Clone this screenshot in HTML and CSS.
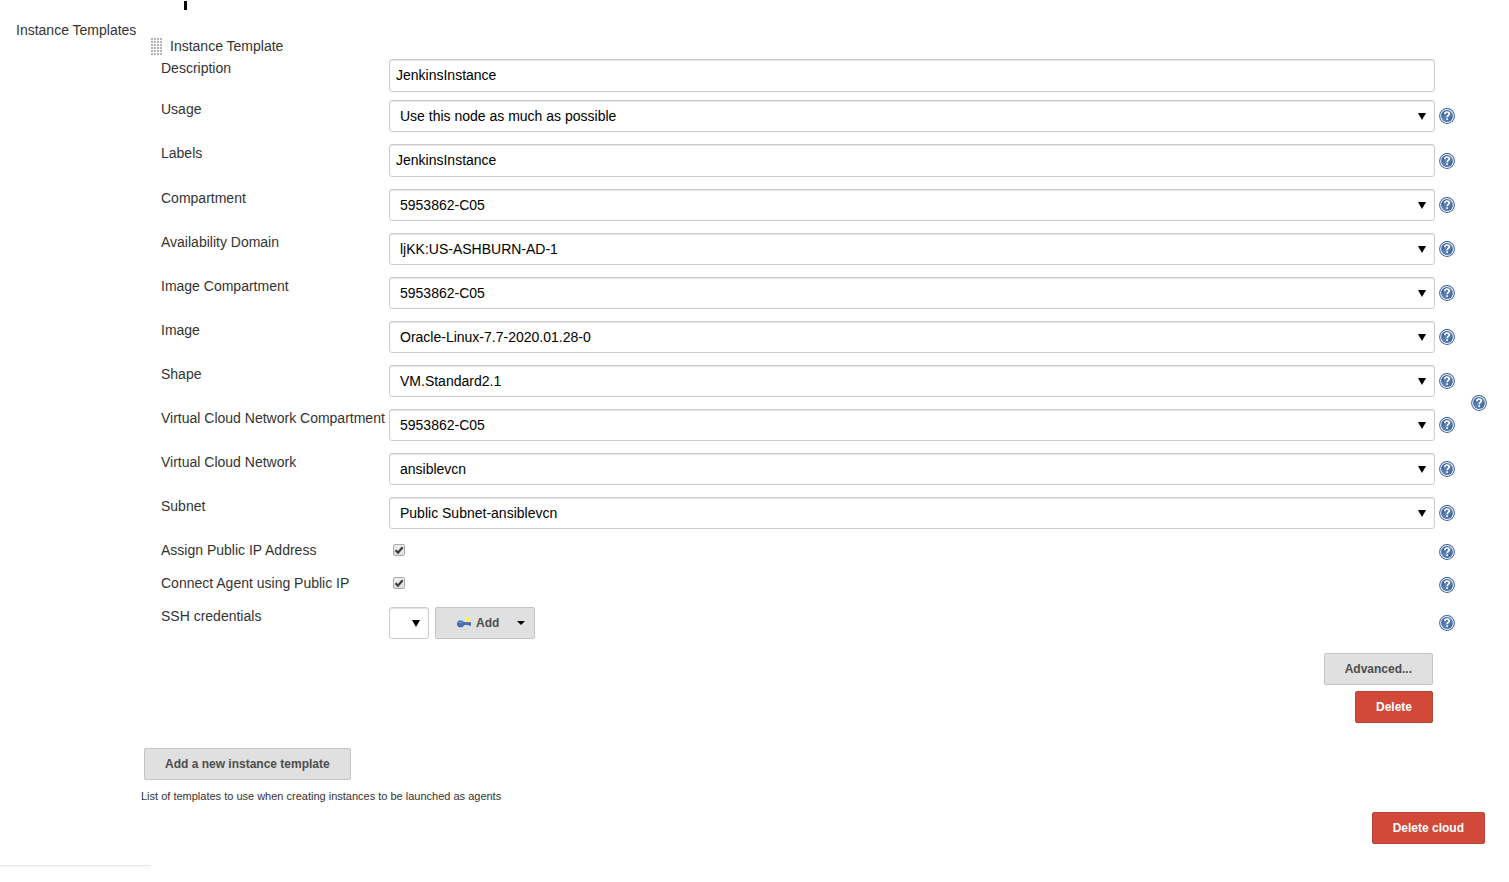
FILE: index.html
```html
<!DOCTYPE html>
<html lang="en">
<head>
<meta charset="utf-8">
<title>Instance Templates</title>
<link rel="stylesheet" href="styles.css">
</head>
<body>
<svg class="defs" aria-hidden="true">
  <defs>
    <linearGradient id="blue" x1="0" y1="0" x2="1" y2="1">
      <stop offset="0" stop-color="#26498a"/><stop offset="0.5" stop-color="#5f86b8"/><stop offset="1" stop-color="#2c508d"/>
    </linearGradient>
    <symbol id="help" viewBox="0 0 16 16">
      <circle cx="8" cy="8" r="7.9" fill="#3a5f9b"/>
      <circle cx="8" cy="8" r="6.9" fill="#f2f6fb"/>
      <circle cx="8" cy="8" r="5.9" fill="url(#blue)"/>
      <path d="M5.800 6.200C5.800 4.600 6.800 4 8 4s2.200.7 2.200 1.900C10.200 7.400 8.200 7.400 8.200 9.200" fill="none" stroke="#fff" stroke-width="1.700"/>
      <rect x="7.300" y="10.300" width="1.800" height="1.800" fill="#fff"/>
    </symbol>
  </defs>
</svg>
<form class="page">
  <section class="cloud">
    <h2 class="section-name">Instance Templates</h2>
    <div class="templates">
      <div class="cut-mark"></div>
      <div class="template">
        <div class="template-head"><span class="grip"></span>Instance Template</div>
        <div class="row row-tight"><label for="desc">Description</label><input class="text" id="desc" type="text" value="JenkinsInstance"></div>
        <div class="row"><label for="usage">Usage</label><div class="pick"><select id="usage"><option>Use this node as much as possible</option></select></div><button class="help" type="button" aria-label="Help"><svg><use href="#help"/></svg></button></div>
        <div class="row"><label for="labels">Labels</label><input class="text" id="labels" type="text" value="JenkinsInstance"><button class="help" type="button" aria-label="Help"><svg><use href="#help"/></svg></button></div>
        <div class="row"><label for="comp">Compartment</label><div class="pick"><select id="comp"><option>5953862-C05</option></select></div><button class="help" type="button" aria-label="Help"><svg><use href="#help"/></svg></button></div>
        <div class="row"><label for="ad">Availability Domain</label><div class="pick"><select id="ad"><option>ljKK:US-ASHBURN-AD-1</option></select></div><button class="help" type="button" aria-label="Help"><svg><use href="#help"/></svg></button></div>
        <div class="row"><label for="imgcomp">Image Compartment</label><div class="pick"><select id="imgcomp"><option>5953862-C05</option></select></div><button class="help" type="button" aria-label="Help"><svg><use href="#help"/></svg></button></div>
        <div class="row"><label for="image">Image</label><div class="pick"><select id="image"><option>Oracle-Linux-7.7-2020.01.28-0</option></select></div><button class="help" type="button" aria-label="Help"><svg><use href="#help"/></svg></button></div>
        <div class="row"><label for="shape">Shape</label><div class="pick"><select id="shape"><option>VM.Standard2.1</option></select></div><button class="help" type="button" aria-label="Help"><svg><use href="#help"/></svg></button></div>
        <div class="row"><label for="vcncomp">Virtual Cloud Network Compartment</label><div class="pick"><select id="vcncomp"><option>5953862-C05</option></select></div><button class="help" type="button" aria-label="Help"><svg><use href="#help"/></svg></button></div>
        <div class="row"><label for="vcn">Virtual Cloud Network</label><div class="pick"><select id="vcn"><option>ansiblevcn</option></select></div><button class="help" type="button" aria-label="Help"><svg><use href="#help"/></svg></button></div>
        <div class="row"><label for="subnet">Subnet</label><div class="pick"><select id="subnet"><option>Public Subnet-ansiblevcn</option></select></div><button class="help" type="button" aria-label="Help"><svg><use href="#help"/></svg></button></div>
        <div class="row"><label for="assign">Assign Public IP Address</label><div class="tick"><input id="assign" type="checkbox" checked><svg viewBox="0 0 12 12"><path d="M2.500 6.200 5 8.600 9.600 3.200" fill="none" stroke="#3c3c3c" stroke-width="2.200"/></svg></div><button class="help" type="button" aria-label="Help"><svg><use href="#help"/></svg></button></div>
        <div class="row"><label for="connect">Connect Agent using Public IP</label><div class="tick"><input id="connect" type="checkbox" checked><svg viewBox="0 0 12 12"><path d="M2.500 6.200 5 8.600 9.600 3.200" fill="none" stroke="#3c3c3c" stroke-width="2.200"/></svg></div><button class="help" type="button" aria-label="Help"><svg><use href="#help"/></svg></button></div>
        <div class="row"><label for="ssh">SSH credentials</label>
          <div class="creds">
            <div class="pick pick-small"><select id="ssh"><option></option></select></div>
            <button class="btn btn-add" type="button">
              <svg class="key" viewBox="0 0 16 14"><path d="M9 1h5v5H9z" fill="#f0eca0"/><path d="M10.500 1.500h2.500v4h-2.500z" fill="#fff04a"/><path d="M1 6.500 2.800 4.500h3.400L8 6l7 .2v3l-1 .8-2-1H8.500L6.500 11.200H3L1 9.500z" fill="#4470b0"/><path d="M2.500 6.500h4" stroke="#7ba0d0"/><path d="M3 13.500h9" stroke="#d0d3da"/></svg>
              Add
              <svg class="caret" viewBox="0 0 8 4"><path d="M0 0h8L4 4z"/></svg>
            </button>
          </div>
          <button class="help" type="button" aria-label="Help"><svg><use href="#help"/></svg></button></div>
        <div class="actions">
          <button class="btn" type="button">Advanced...</button>
          <button class="btn btn-danger" type="button">Delete</button>
        </div>
      </div>
      <button class="btn btn-new" type="button">Add a new instance template</button>
      <p class="hint">List of templates to use when creating instances to be launched as agents</p>
    </div>
    <button class="help" type="button" aria-label="Help"><svg><use href="#help"/></svg></button>
  </section>
  <div class="cloud-actions"><button class="btn btn-danger" type="button">Delete cloud</button></div>
  <hr class="rule">
</form>
</body>
</html>
```
FILE: styles.css
```css
* { box-sizing: border-box; }
body {
  margin: 0;
  background: #fff;
  color: #333;
  font: 14px/18px "Liberation Sans", Arial, sans-serif;
}
.defs { position: absolute; width: 0; height: 0; }
.cloud {
  display: grid;
  grid-template-columns: 125px 1fr 16px;
  padding: 0 22px 0 16px;
}
.section-name {
  margin: 21px 0 0;
  font-size: 14px;
  font-weight: normal;
  white-space: nowrap;
}
.templates { padding-right: 16px; }
.cut-mark {
  width: 3px;
  height: 9px;
  margin: 1px 0 27px 43px;
  background: #000;
}
.template { padding-left: 20px; }
.template-head {
  display: flex;
  align-items: center;
  gap: 8px;
  margin: 0 0 4px -10px;
}
.grip {
  width: 11px;
  height: 17px;
  background: radial-gradient(circle at 1px 1px, #b4b4b4 0 1px, transparent 1px) 0 0 / 3px 3px;
}
.row {
  display: grid;
  grid-template-columns: 224px 1fr 16px;
  column-gap: 4px;
  align-items: center;
  margin-bottom: 12px;
}
.row-tight { margin-bottom: 8px; }
.row > label { align-self: start; white-space: nowrap; }
.text, select {
  width: 100%;
  border: 1px solid #ccc;
  border-radius: 3px;
  background: #fff;
  box-shadow: inset 0 1px 1px #e4e4e4;
  color: #000;
  font: inherit;
}
.text { height: 33px; padding: 5px 6px 7px; }
select { display: block; height: 32px; padding: 0 24px 0 10px; appearance: none; }
.pick { position: relative; }
.pick::after {
  content: "";
  position: absolute;
  top: 13px;
  right: 9px;
  border: 4px solid transparent;
  border-top: 7px solid #000;
  border-bottom: 0;
  pointer-events: none;
}
.pick-small { width: 40px; }
.pick-small select { padding: 0 10px; }
.help {
  display: block;
  width: 16px;
  height: 16px;
  padding: 0;
  border: 0;
  background: none;
  align-self: center;
}
.help svg { display: block; width: 16px; height: 16px; }
.tick {
  position: relative;
  height: 21px;
  padding: 3px 4px;
}
.tick input {
  display: block;
  width: 12px;
  height: 12px;
  margin: 0;
  appearance: none;
  border: 1px solid #aaa;
  border-radius: 2px;
  background: linear-gradient(#f0f0f0, #dedede);
}
.tick svg {
  position: absolute;
  top: 3px;
  left: 4px;
  width: 12px;
  height: 12px;
  pointer-events: none;
}
.creds { display: flex; gap: 6px; }
.btn {
  height: 32px;
  padding: 0 20px;
  border: 1px solid #c4c4c4;
  border-radius: 2px;
  background: #e0e0e0;
  color: #4d4d4d;
  font: bold 12px/30px "Liberation Sans", Arial, sans-serif;
  white-space: nowrap;
}
.btn-danger { background: #d24939; border-color: #b84235; color: #fff; }
.btn-add { display: flex; align-items: center; width: 100px; padding: 0 9px 0 20px; }
.key { width: 16px; height: 14px; margin-right: 4px; }
.caret { width: 8px; height: 4px; margin-left: auto; fill: #000; }
.actions {
  display: flex;
  flex-direction: column;
  align-items: flex-end;
  gap: 6px;
  margin: 14px 22px 25px 0;
}
.btn-new { display: block; margin-left: 3px; }
.hint { margin: 7px 0 0; font-size: 11px; line-height: 18px; }
.cloud-actions { display: flex; justify-content: flex-end; padding: 7px 24px 0 0; }
.rule {
  width: 151px;
  height: 3px;
  margin: 21px 0 0;
  border: 0;
  border-top: 1px solid #e8e8e8;
  background: #fafafa;
}
```
